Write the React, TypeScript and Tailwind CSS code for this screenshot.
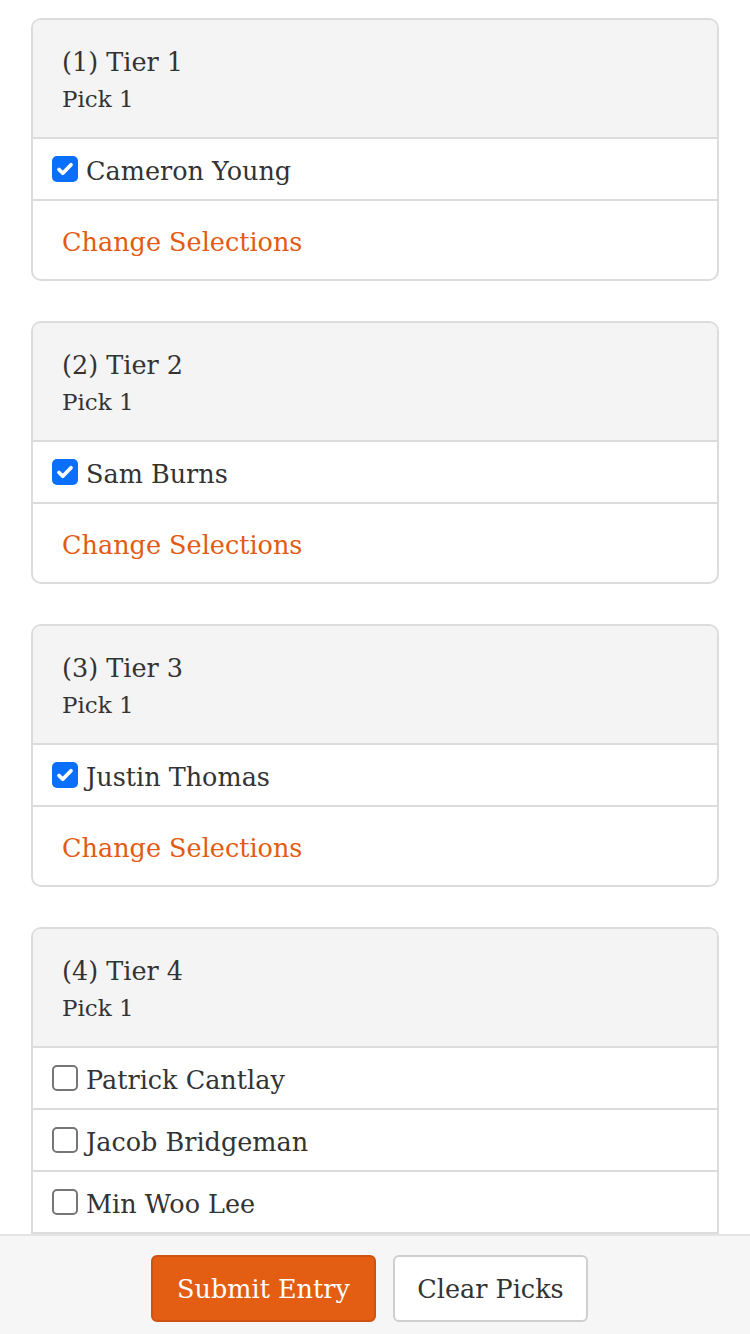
const tiers = [
  { n: 1, picks: [{ name: "Cameron Young", checked: true }], done: true },
  { n: 2, picks: [{ name: "Sam Burns", checked: true }], done: true },
  { n: 3, picks: [{ name: "Justin Thomas", checked: true }], done: true },
  {
    n: 4,
    picks: [
      { name: "Patrick Cantlay", checked: false },
      { name: "Jacob Bridgeman", checked: false },
      { name: "Min Woo Lee", checked: false },
    ],
    done: false,
  },
];

function Box({ checked }: { checked: boolean }) {
  if (checked) {
    return (
      <span className="w-[26px] h-[26px] rounded-[5px] bg-[#0b6ffd] flex items-center justify-center shrink-0">
        <svg width="20" height="20" viewBox="0 0 16 16">
          <path d="M3.2 8.4l3 3L12.8 4.6" fill="none" stroke="#fff" strokeWidth="3" strokeLinecap="round" strokeLinejoin="round" />
        </svg>
      </span>
    );
  }
  return <span className="w-[26px] h-[26px] rounded-[5px] border-2 border-[#767676] bg-white shrink-0" />;
}

export default function App() {
  return (
    <div
      className="w-[750px] h-[1334px] flex flex-col overflow-hidden bg-white text-[#333]"
      style={{ fontFamily: '"DejaVu Serif", "Liberation Serif", serif' }}
    >
      <div className="flex-1 overflow-hidden px-[31px] pt-[18px] flex flex-col gap-[40px]">
        {tiers.map((t) => (
          <div
            key={t.n}
            className={
              t.done
                ? "border-2 border-[#dcdcdc] rounded-[10px] overflow-hidden shrink-0"
                : "border-2 border-b-0 border-[#dcdcdc] rounded-t-[10px] overflow-hidden shrink-0"
            }
          >
            <div className="bg-[#f4f4f4] h-[119px] border-b-2 border-[#dcdcdc] pl-[29px] pt-[24px]">
              <p className="text-[25.5px] leading-[37px]">({t.n}) Tier {t.n}</p>
              <p className="text-[23px] leading-[36px]">Pick 1</p>
            </div>
            {t.picks.map((p) => (
              <div key={p.name} className="h-[62px] border-b-2 border-[#dcdcdc] flex items-center gap-[8px] pl-[19px]">
                <Box checked={p.checked} />
                <span className="text-[25.5px] leading-[32px] pt-[4px]">{p.name}</span>
              </div>
            ))}
            {t.done && (
              <div className="h-[78px] flex items-center pl-[29px] pt-[4px]">
                <span className="text-[25.5px] text-[#e35b13]">Change Selections</span>
              </div>
            )}
          </div>
        ))}
      </div>
      <div className="h-[100px] shrink-0 bg-[#f6f6f6] border-t-2 border-[#e4e4e4] flex justify-center items-start pt-[19px] pr-[11px] gap-[17px]">
        <button className="w-[225px] h-[67px] rounded-[6px] bg-[#e35d13] border-2 border-[#cf5210] text-white text-[25.5px] leading-[32px]">
          Submit Entry
        </button>
        <button className="w-[195px] h-[67px] rounded-[6px] bg-white border-2 border-[#cfcfcf] text-[#333] text-[25.5px] leading-[32px]">
          Clear Picks
        </button>
      </div>
    </div>
  );
}
